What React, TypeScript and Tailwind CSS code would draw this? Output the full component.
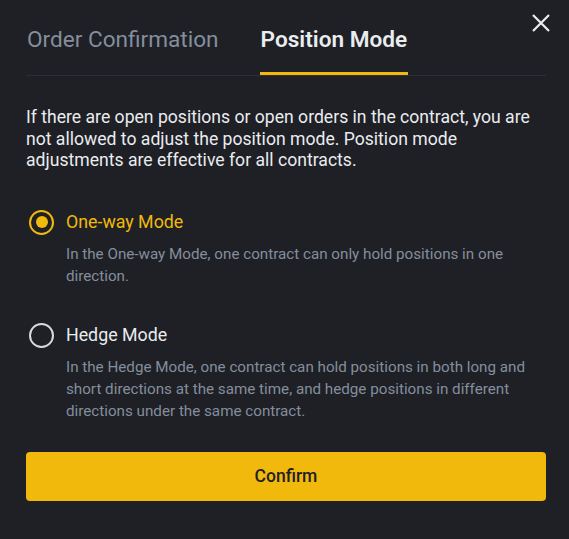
import { useState } from "react";

const modes = [
  {
    id: "oneway",
    label: "One-way Mode",
    desc: "In the One-way Mode, one contract can only hold positions in one direction.",
  },
  {
    id: "hedge",
    label: "Hedge Mode",
    desc: "In the Hedge Mode, one contract can hold positions in both long and short directions at the same time, and hedge positions in different directions under the same contract.",
  },
];

function Radio({ checked }: { checked: boolean }) {
  return checked ? (
    <span className="ml-[3px] flex h-[25px] w-[25px] shrink-0 items-center justify-center rounded-full border-[2.5px] border-[#f0b90b]">
      <span className="h-[12px] w-[12px] rounded-full bg-[#f0b90b]" />
    </span>
  ) : (
    <span className="ml-[3px] h-[25px] w-[25px] shrink-0 rounded-full border-[2.5px] border-[#d8dadd]" />
  );
}

export default function App() {
  const [tab, setTab] = useState("position");
  const [mode, setMode] = useState("oneway");

  const tabCls = (active: boolean) =>
    active
      ? "border-b-[3px] border-[#f0b90b] px-[1px] pb-[14px] text-[22.6px] font-semibold leading-[36px] text-[#eaecef]"
      : "border-b-[3px] border-transparent px-[1px] pb-[14px] text-[22.6px] leading-[36px] text-[#848e9c]";

  return (
    <div
      className="relative min-h-[539px] w-full bg-[#1e2026] pl-[26px] pr-[23px] pt-[22px]"
      style={{ fontFamily: "Roboto, 'Liberation Sans', sans-serif" }}
    >
      <button className="absolute right-[18px] top-[13px] text-[#eaecef]">
        <svg width="20" height="20" viewBox="0 0 20 20" fill="none" stroke="currentColor" strokeWidth="2.2">
          <path d="M2 2L18 18M18 2L2 18" />
        </svg>
      </button>

      {/* tabs */}
      <div className="flex gap-[40px] border-b border-[#2b2f36]">
        <button onClick={() => setTab("order")} className={tabCls(tab === "order")}>
          Order Confirmation
        </button>
        <button onClick={() => setTab("position")} className={tabCls(tab === "position")}>
          Position Mode
        </button>
      </div>

      <p className="mt-[31px] text-[17.6px] leading-[21.5px] text-[#eaecef]">
        If there are open positions or open orders in the contract, you are not allowed to adjust the position mode. Position mode adjustments are effective for all contracts.
      </p>

      <div className="mt-[38px] flex flex-col gap-[36px]">
        {modes.map((m) => (
          <div key={m.id} className="cursor-pointer" onClick={() => setMode(m.id)}>
            <div className="flex items-center gap-[12px]">
              <Radio checked={mode === m.id} />
              <span className={`text-[17.8px] leading-[24px] ${mode === m.id ? "text-[#f0b90b]" : "text-[#eaecef]"}`}>
                {m.label}
              </span>
            </div>
            <p className="mt-[8px] pl-[40px] pr-[16px] text-[15.2px] leading-[22px] text-[#848e9c]">{m.desc}</p>
          </div>
        ))}
      </div>

      <button className="mt-[30px] h-[49px] w-full rounded-[4px] bg-[#f0b90b] text-[17.5px] font-medium text-[#1e2026]">
        Confirm
      </button>
    </div>
  );
}
